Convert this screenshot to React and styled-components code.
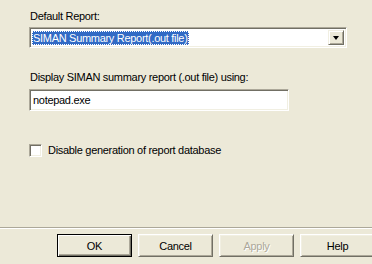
import React from "react";
import styled, { createGlobalStyle } from "styled-components";

const GlobalStyle = createGlobalStyle`
    html, body {
        margin: 0;
        padding: 0;
        background: #ece9d8;
        overflow: hidden;
    }
    body {
        font-family: "Liberation Sans", Arial, sans-serif;
        font-size: 11px;
        letter-spacing: -0.3px;
        color: #000;
    }
`;

const Dialog = styled.div`
    width: 372px;
    height: 264px;
    display: flex;
    flex-direction: column;
    background: #ece9d8;
    overflow: hidden;
`;

const Page = styled.div`
    flex: 1;
    display: flex;
    flex-direction: column;
    padding: 10px 0 0 29px;
`;

const Label = styled.div`
    line-height: 13px;
    height: 13px;
    padding-left: 1px;
    margin-bottom: ${({ $gap }) => $gap}px;
`;

const sunken = `
    border: 1px solid;
    border-color: #aca899 #ffffff #ffffff #aca899;
    box-shadow: inset 1px 1px 0 #716f64, inset -1px -1px 0 #f1efe2;
`;

const Combo = styled.div`
    ${sunken};
    box-sizing: border-box;
    width: 318px;
    height: 21px;
    padding: 2px;
    display: flex;
    align-items: stretch;
    background: #fff;
    margin-bottom: 23px;
`;

const ComboValue = styled.div`
    flex: 1;
    display: flex;
    align-items: center;
`;

const Selected = styled.span`
    background: #316ac5;
    color: #fff;
    line-height: 14px;
    padding: 0 1px;
    outline: 1px dotted #ffffff;
    outline-offset: -1px;
`;

const DropButton = styled.div`
    width: 16px;
    box-sizing: border-box;
    background: #ece9d8;
    border: 1px solid;
    border-color: #f1efe2 #716f64 #716f64 #f1efe2;
    box-shadow: inset 1px 1px 0 #ffffff, inset -1px -1px 0 #aca899;
    display: flex;
    align-items: center;
    justify-content: center;
`;

const Arrow = styled.span`
    width: 0;
    height: 0;
    border-left: 3.5px solid transparent;
    border-right: 3.5px solid transparent;
    border-top: 4px solid #000;
    margin-top: 1px;
`;

const TextBox = styled.div`
    ${sunken};
    box-sizing: border-box;
    width: 260px;
    height: 22px;
    background: #fff;
    padding: 0 3px;
    display: flex;
    align-items: center;
    margin-bottom: 33px;
`;

const CheckRow = styled.label`
    display: flex;
    align-items: center;
    gap: 6px;
    line-height: 13px;
`;

const CheckBox = styled.span`
    ${sunken};
    box-sizing: border-box;
    width: 13px;
    height: 13px;
    background: #fff;
`;

const Separator = styled.div`
    height: 1px;
    background: #aca899;
    border-bottom: 1px solid #ffffff;
`;

const ButtonRow = styled.div`
    display: flex;
    gap: 6px;
    padding: 5px 0 7px 57px;
    white-space: nowrap;
`;

const Button = styled.div`
    flex: none;
    box-sizing: border-box;
    width: 75px;
    height: 23px;
    display: flex;
    align-items: center;
    justify-content: center;
    background: #ece9d8;
    color: ${({ $disabled }) => ($disabled ? "#aca899" : "#000")};
    text-shadow: ${({ $disabled }) => ($disabled ? "1px 1px 0 #ffffff" : "none")};
    border: 1px solid;
    border-color: ${({ $default }) =>
        $default ? "#000 #000 #000 #000" : "#ffffff #716f64 #716f64 #ffffff"};
    box-shadow: ${({ $default }) =>
        $default
            ? "inset 1px 1px 0 #ffffff, inset -1px -1px 0 #716f64, inset -2px -2px 0 #aca899"
            : "inset 1px 1px 0 #f1efe2, inset -1px -1px 0 #aca899"};
`;

const App = () => {
    return (
        <Dialog>
            <GlobalStyle />
            <Page>
                <Label $gap={4}>Default Report:</Label>
                <Combo>
                    <ComboValue>
                        <Selected>SIMAN Summary Report(.out file)</Selected>
                    </ComboValue>
                    <DropButton>
                        <Arrow />
                    </DropButton>
                </Combo>
                <Label $gap={5}>Display SIMAN summary report (.out file) using:</Label>
                <TextBox>notepad.exe</TextBox>
                <CheckRow>
                    <CheckBox />
                    Disable generation of report database
                </CheckRow>
            </Page>
            <Separator />
            <ButtonRow>
                <Button $default>OK</Button>
                <Button>Cancel</Button>
                <Button $disabled>Apply</Button>
                <Button>Help</Button>
            </ButtonRow>
        </Dialog>
    );
};

export default App;
